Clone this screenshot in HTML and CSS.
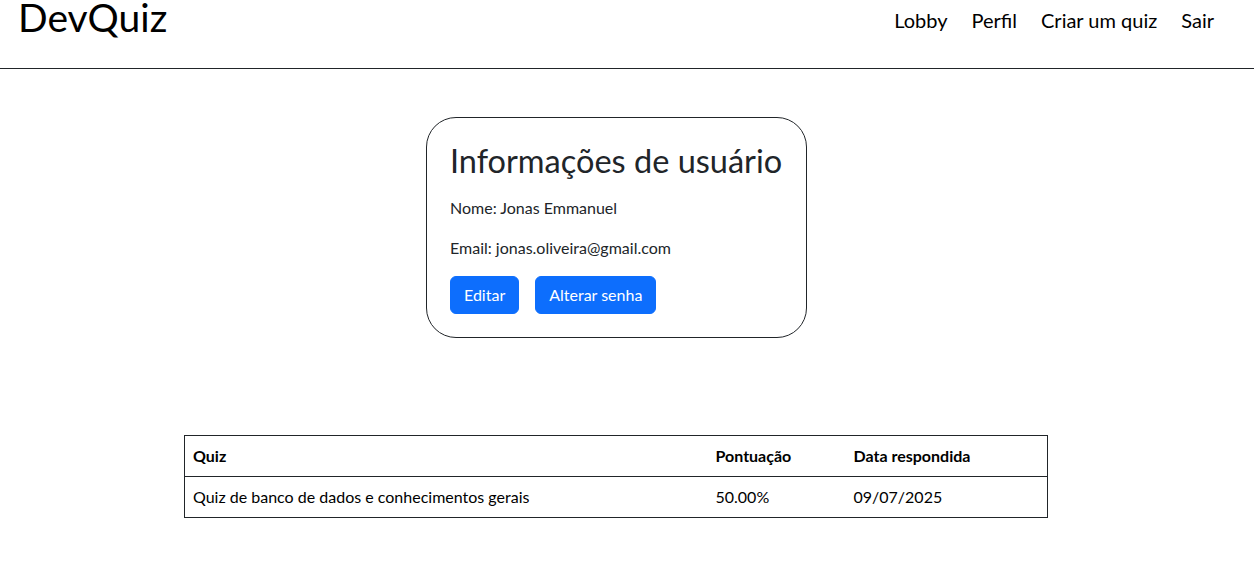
FILE: index.html
```html
<!DOCTYPE html>
<html lang="pt-BR">
<head>
<meta charset="utf-8">
<title>DevQuiz - Perfil</title>
<link rel="stylesheet" href="styles.css">
</head>
<body>
<header class="topbar">
  <div class="brand">DevQuiz</div>
  <nav class="nav">
    <a class="nav-link" href="#">Lobby</a>
    <a class="nav-link" href="#">Perfil</a>
    <a class="nav-link" href="#">Criar um quiz</a>
    <a class="nav-link" href="#">Sair</a>
  </nav>
</header>
<main class="content">
  <section class="card">
    <h2 class="card-title">Informações de usuário</h2>
    <p class="info">Nome: Jonas Emmanuel</p>
    <p class="info">Email: jonas.oliveira@gmail.com</p>
    <div class="actions">
      <button class="btn">Editar</button>
      <button class="btn">Alterar senha</button>
    </div>
  </section>
  <table class="results">
    <colgroup>
      <col class="col-quiz">
      <col class="col-score">
      <col class="col-date">
    </colgroup>
    <thead>
      <tr><th>Quiz</th><th>Pontuação</th><th>Data respondida</th></tr>
    </thead>
    <tbody>
      <tr><td>Quiz de banco de dados e conhecimentos gerais</td><td>50.00%</td><td>09/07/2025</td></tr>
    </tbody>
  </table>
</main>
</body>
</html>
```

FILE: styles.css
```css
* { box-sizing: border-box; }

body {
  margin: 0;
  font-family: Lato, "Open Sans", sans-serif;
  font-size: 16px;
  line-height: 24px;
  color: #212529;
  background: #fff;
}

.topbar {
  display: flex;
  justify-content: space-between;
  align-items: flex-start;
  height: 69px;
  padding: 0 40px 0 18px;
  border-bottom: 1px solid #212529;
}

.brand {
  font-size: 39px;
  line-height: 35px;
  color: #000;
}

.nav {
  display: flex;
  gap: 24px;
  padding-top: 8px;
}

.nav-link {
  font-size: 20px;
  line-height: 24px;
  color: #000;
  text-decoration: none;
}

.content {
  width: 1232px;
  display: flex;
  flex-direction: column;
  align-items: center;
}

.card {
  margin: 48px 0 0 1px;
  width: 381px;
  border: 1px solid #212529;
  border-radius: 30px;
  padding: 23px;
}

.card-title {
  margin: 0 0 16px;
  font-size: 32.5px;
  line-height: 39px;
  font-weight: 400;
  white-space: nowrap;
}

.info {
  margin: 0 0 16px;
}

.actions {
  display: flex;
  gap: 16px;
}

.btn {
  font-family: inherit;
  font-size: 16px;
  line-height: 24px;
  height: 38px;
  padding: 6px 13px;
  border: 1px solid #0d6efd;
  border-radius: 6px;
  background: #0d6efd;
  color: #fff;
}

.results {
  margin-top: 97px;
  width: 864px;
  border-collapse: collapse;
  border: 1px solid #212529;
  color: #000;
}

.col-quiz { width: 523px; }
.col-score { width: 138px; }

.results th,
.results td {
  text-align: left;
  padding: 8px;
  line-height: 24px;
  border-bottom: 1px solid #212529;
}

.results th { font-weight: 700; }
```
